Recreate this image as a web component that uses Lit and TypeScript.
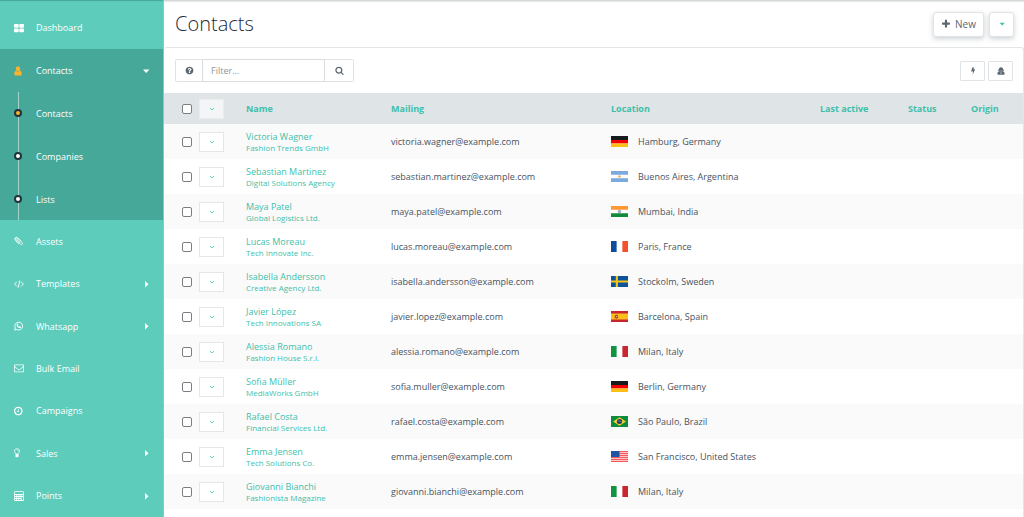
import { LitElement, html, svg, css } from "lit";
import { customElement, property, state } from "lit/decorators.js";

const FA = "0 0 1792 1792";

const icons: Record<string, { box: string; body: unknown }> = {
  dashboard: {
    box: "0 0 10 10",
    body: svg`<rect x="0" y="1" width="4.7" height="3.8" rx=".7"/><rect x="5.3" y="1" width="4.7" height="3.8" rx=".7"/><rect x="0" y="5.4" width="4.7" height="3.8" rx=".7"/><rect x="5.3" y="5.4" width="4.7" height="3.8" rx=".7"/>`,
  },
  user: {
    box: "0 0 10 10",
    body: svg`<ellipse cx="4" cy="2.8" rx="2.2" ry="2.5"/><path d="M2 4.6C.8 5 .3 6.300 .3 7.700 .3 8.900 1 9.600 2 9.600h4c1 0 1.700-.7 1.700-1.900C7.700 6.300 7.200 5 6 4.600 5.500 5.300 4.800 5.700 4 5.700S2.500 5.300 2 4.600z"/>`,
  },
  clip: {
    box: "0 0 10 10",
    body: svg`<path d="M6.600 4.600 3.300 2c-1.300-.9-2.500.6-1.400 1.600l4.500 4.600c1.300 1.200 2.900-.3 1.700-1.700L3.900 2.100C2.200.3-.6 2.300 1.200 4.300l3.400 3.400M2.800 3.300l3.400 3.500" fill="none" stroke="currentColor" stroke-width=".8" stroke-linecap="round"/>`,
  },
  code: {
    box: "0 0 10 10",
    body: svg`<path d="M3 2.700.6 5.100 3 7.500M7 2.700l2.400 2.400L7 7.500M5.800 1.500 4.200 8.700" fill="none" stroke="currentColor" stroke-width=".9"/>`,
  },
  whatsapp: {
    box: "0 0 10 10",
    body: svg`<path d="M.7 9.100 1.300 7A3.900 3.900 0 1 1 2.800 8.500z" fill="none" stroke="currentColor" stroke-width=".9"/><path d="M3.300 2.700c.3-.2.600-.1.700.2l.3.800-.4.700c.3.700.8 1.100 1.500 1.400l.6-.6 1 .5c.2.2.1.700-.2 1-.6.500-1.300.4-2.200 0C3.600 6.200 2.900 5.300 2.700 4.400c-.1-.7.100-1.400.6-1.700z"/>`,
  },
  mail: {
    box: FA,
    body: svg`<path d="M1664 1504v-768q-32 36-69 66-268 206-426 338-51 43-83 67t-86.500 48.500-102.500 24.500h-2q-48 0-102.500-24.500t-86.500-48.500-83-67q-158-132-426-338-37-30-69-66v768q0 13 9.500 22.500t22.500 9.500h1472q13 0 22.500-9.500t9.500-22.500zm0-1051v-24.500l-.5-13-3-12.500-5.500-9-9-7.500-14-2.500h-1472q-13 0-22.500 9.500t-9.500 22.500q0 168 147 284 193 152 401 317 6 5 35 29.500t46 37.500 44.500 31.500 50.500 27.500 43 9h2q20 0 43-9t50.500-27.500 44.500-31.500 46-37.500 35-29.500q208-165 401-317 54-43 100.500-115.500t46.500-131.500zm128-37v1088q0 66-47 113t-113 47h-1472q-66 0-113-47t-47-113v-1088q0-66 47-113t113-47h1472q66 0 113 47t47 113z"/>`,
  },
  clock: {
    box: "128 0 1792 1792",
    body: svg`<path d="M1024 544v448q0 14-9 23t-23 9h-320q-14 0-23-9t-9-23v-64q0-14 9-23t23-9h224v-352q0-14 9-23t23-9h64q14 0 23 9t9 23zm416 352q0-148-73-273t-198-198-273-73-273 73-198 198-73 273 73 273 198 198 273 73 273-73 198-198 73-273zm224 0q0 209-103 385.500t-279.500 279.500-385.500 103-385.500-103-279.500-279.500-103-385.500 103-385.500 279.500-279.500 385.500-103 385.500 103 279.500 279.500 103 385.500z"/>`,
  },
  bulb: {
    box: "0 0 10 10",
    body: svg`<path d="M2 6.200C1.800 5 .5 4.500.5 2.900.5 1.600 1.600.8 3 .8s2.500.8 2.500 2.100C5.500 4.500 4.200 5 4 6.200z" fill="none" stroke="currentColor" stroke-width=".8"/><path d="M3 2c.8 0 1.200.4 1.200 1" fill="none" stroke="currentColor" stroke-width=".5"/><path d="M1.500 6h3v2.200L3.700 9.300H2.300L1.500 8.200z"/>`,
  },
  calculator: {
    box: "0 0 10 10",
    body: svg`<path fill-rule="evenodd" d="M.8.3h8.400q.6 0 .6.6v8.400q0 .6-.6.600H.8q-.6 0-.6-.6V.9Q.2.300.8.300zM1 1.100v1.900h8V1.100zM1 4v1h1.300V4zM3.200 4v1h1.300V4zM5.400 4v1h1.300V4zM7.600 4v1H9V4zM1 6v1h1.300V6zM3.200 6v1h1.300V6zM5.400 6v1h1.300V6zM1 8v1h1.300V8zM3.200 8v1h1.300V8zM5.400 8v1h1.300V8zM7.600 6v3H9V6z"/>`,
  },
  down: { box: "0 0 10 10", body: svg`<path d="M2 3.500h6.400L5.200 7z"/>` },
  right: { box: "0 0 10 10", body: svg`<path d="M4 2v6.400L7.500 5.200z"/>` },
  chevron: {
    box: "0 0 10 10",
    body: svg`<path d="m1.500 3.500 3.500 3 3.500-3" fill="none" stroke="currentColor" stroke-width="1.600"/>`,
  },
  help: {
    box: FA,
    body: svg`<path d="M1024 1376v-192q0-14-9-23t-23-9h-192q-14 0-23 9t-9 23v192q0 14 9 23t23 9h192q14 0 23-9t9-23zm256-672q0-88-55.500-163t-138.500-116-170-41q-243 0-371 213-15 24 8 42l132 100q7 6 19 6 16 0 25-12 53-68 86-92 34-24 86-24 48 0 85.500 26t37.500 59q0 38-20 61t-68 45q-63 28-115.500 86.500t-52.500 125.500v36q0 14 9 23t23 9h192q14 0 23-9t9-23q0-19 21.500-49.500t54.500-49.500q32-18 49-28.500t46-35 44.500-48 28-60.500 12.500-81zm384 192q0 209-103 385.500t-279.500 279.500-385.500 103-385.500-103-279.500-279.500-103-385.500 103-385.500 279.500-279.500 385.500-103 385.500 103 279.500 279.500 103 385.500z"/>`,
  },
  search: {
    box: FA,
    body: svg`<path d="M1216 832q0-185-131.500-316.500t-316.500-131.500-316.500 131.500-131.500 316.500 131.500 316.500 316.500 131.500 316.500-131.500 131.500-316.500zm512 832q0 52-38 90t-90 38q-54 0-90-38l-343-342q-179 124-399 124-143 0-273.500-55.500t-225-150-150-225-55.500-273.500 55.500-273.500 150-225 225-150 273.500-55.500 273.500 55.500 225 150 150 225 55.500 273.500q0 220-124 399l343 343q37 37 37 90z"/>`,
  },
  plus: {
    box: FA,
    body: svg`<path d="M1600 736v192q0 40-28 68t-68 28h-416v416q0 40-28 68t-68 28h-192q-40 0-68-28t-28-68v-416h-416q-40 0-68-28t-28-68v-192q0-40 28-68t68-28h416v-416q0-40 28-68t68-28h192q40 0 68 28t28 68v416h416q40 0 68 28t28 68z"/>`,
  },
  bolt: { box: "0 0 10 10", body: svg`<path d="M4 .7h2.400L5.600 3.200 7.700 2.800 4.500 9.600 5 5.300 2.700 5.800z"/>` },
  anonymous: {
    box: "0 0 10 10",
    body: svg`<path fill-rule="evenodd" d="M3 .8Q5-.1 7 .8L7.700 3.100Q9 3.500 9 4 8.800 4.400 8.100 4.500q.1.900-.3 1.500Q9.600 6.600 9.600 8.300 9.600 9.700 8.200 9.700H1.800Q.4 9.700.4 8.300.4 6.600 2.200 6 1.800 5.400 1.900 4.500 1.200 4.400 1 4 1 3.500 2.300 3.100zM3 4.600v.8h1.700v-.8zM5.300 4.600v.8H7v-.8zM4.400 6.900 4.700 9 5 7.800 5.300 9 5.600 6.900z"/>`,
  },
};

const flags: Record<string, unknown> = {
  de: svg`<path fill="#141a1e" d="M0 0h16v4H0z"/><path fill="#f00000" d="M0 4h16v3.500H0z"/><path fill="#fdbf16" d="M0 7.500h16V11H0z"/>`,
  ar: svg`<path fill="#7caadf" d="M0 0h16v11H0z"/><path fill="#fff" d="M0 3.700h16v3.600H0z"/><circle cx="8" cy="5.500" r="1.300" fill="#f5b25c"/>`,
  in: svg`<path fill="#fff" d="M0 0h16v11H0z"/><path fill="#fb9933" d="M0 0h16v3.700H0z"/><path fill="#118a3c" d="M0 7.300h16V11H0z"/><circle cx="8" cy="5.500" r="1.200" fill="#a9b1cf" stroke="#6a76a8" stroke-width=".5"/>`,
  fr: svg`<path fill="#fff" d="M0 0h16v11H0z"/><path fill="#0c4da2" d="M0 0h5.300v11H0z"/><path fill="#f2502f" d="M10.700 0H16v11h-5.300z"/>`,
  se: svg`<path fill="#0d539b" d="M0 0h16v11H0z"/><path fill="#f8c517" d="M4.500 0h2v11h-2zM0 4.500h16v2H0z"/>`,
  es: svg`<path fill="#c9252f" d="M0 0h16v11H0z"/><path fill="#fbbe1a" d="M0 2.500h16v6H0z"/><path fill="#b34b35" d="M3.500 4.500 5 3.500l1.600 1V7L5 7.800 3.500 7z"/><path fill="#e7a77a" d="M4.700 5h1v1h-1z"/>`,
  it: svg`<path fill="#fff" d="M0 0h16v11H0z"/><path fill="#0f943f" d="M0 0h5.300v11H0z"/><path fill="#ca2630" d="M10.700 0H16v11h-5.300z"/>`,
  br: svg`<path fill="#0f8b3e" d="M0 0h16v11H0z"/><path fill="#f8ce28" d="m8 1.200 6 4.300-6 4.300-6-4.300z"/><circle cx="8" cy="5.500" r="2.500" fill="#193b72"/><path d="M6 4.900q2-.3 4 1.200" stroke="#a9bccb" stroke-width=".5" fill="none"/>`,
  us: svg`<rect width="16" height="11" fill="#ffc9c9"/>${[0, 2, 4, 6, 8, 10].map((y) => svg`<rect y=${y} width="16" height="1" fill="#f7575b"/>`)}<rect width="8" height="6" fill="#1f55a5"/>`,
};

@customElement("ui-icon")
class UiIcon extends LitElement {
  @property() name = "";
  static styles = css`
    :host { display: inline-flex; width: 10px; height: 10px; flex: none; }
    svg { width: 100%; height: 100%; fill: currentColor; overflow: visible; }
  `;
  render() {
    const icon = icons[this.name];
    return html`<svg viewBox=${icon.box} aria-hidden="true">${icon.body}</svg>`;
  }
}

interface MenuItem { label: string; icon: string; more?: boolean }

const menu: MenuItem[] = [
  { label: "Assets", icon: "clip" },
  { label: "Templates", icon: "code", more: true },
  { label: "Whatsapp", icon: "whatsapp", more: true },
  { label: "Bulk Email", icon: "mail" },
  { label: "Campaigns", icon: "clock" },
  { label: "Sales", icon: "bulb", more: true },
  { label: "Points", icon: "calculator", more: true },
];

@customElement("side-nav")
class SideNav extends LitElement {
  static styles = css`
    :host { display: flex; width: 164px; flex: none; background: #5dccbb; }
    nav { flex: 1; display: flex; flex-direction: column; padding-top: 6px; border-right: 1px solid #73d3c4; box-shadow: inset 0 2px 1px -1px #48a596; }
    a { display: flex; align-items: center; color: #fff; text-decoration: none; font-size: 9px; height: 43px; box-sizing: border-box; padding: 0 12px 0 14px; }
    .label { flex: 1; padding-left: 12px; }
    .lead { color: #fff; }
    .rest { flex: 1; display: flex; flex-direction: column; }
    .rest a { flex: 1 0 auto; height: auto; min-height: 42px; max-height: 43px; }
    .open { background: #46a899; }
    .open .lead { color: #fbb32b; }
    .sub { display: flex; flex-direction: column; gap: 1px; margin-left: 18px; border-left: 1px solid #a3d4cc; }
    .sub a { height: 42px; padding: 0 12px 0 0; }
    .sub .label { padding-left: 14px; }
    .dot { width: 8px; height: 8px; box-sizing: border-box; border: 2px solid #20343a; border-radius: 50%; background: #fff; margin-left: -5px; flex: none; }
    .current .dot { background: #fbb32b; }
  `;
  item(m: MenuItem, arrow = "right") {
    return html`<a href="#"><ui-icon class="lead" name=${m.icon}></ui-icon><span class="label">${m.label}</span>${m.more ? html`<ui-icon name=${arrow}></ui-icon>` : ""}</a>`;
  }
  render() {
    return html`<nav>
      ${this.item({ label: "Dashboard", icon: "dashboard" })}
      <div class="open">
        ${this.item({ label: "Contacts", icon: "user", more: true }, "down")}
        <div class="sub">
          ${["Contacts", "Companies", "Lists"].map((l, i) => html`<a href="#" class=${i ? "" : "current"}><span class="dot"></span><span class="label">${l}</span></a>`)}
        </div>
      </div>
      <div class="rest">${menu.map((m) => this.item(m))}</div>
    </nav>`;
  }
}

const contacts = [
  ["Victoria Wagner", "Fashion Trends GmbH", "victoria.wagner@example.com", "de", "Hamburg, Germany"],
  ["Sebastian Martinez", "Digital Solutions Agency", "sebastian.martinez@example.com", "ar", "Buenos Aires, Argentina"],
  ["Maya Patel", "Global Logistics Ltd.", "maya.patel@example.com", "in", "Mumbai, India"],
  ["Lucas Moreau", "Tech Innovate Inc.", "lucas.moreau@example.com", "fr", "Paris, France"],
  ["Isabella Andersson", "Creative Agency Ltd.", "isabella.andersson@example.com", "se", "Stockolm, Sweden"],
  ["Javier López", "Tech Innovations SA", "javier.lopez@example.com", "es", "Barcelona, Spain"],
  ["Alessia Romano", "Fashion House S.r.l.", "alessia.romano@example.com", "it", "Milan, Italy"],
  ["Sofia Müller", "MediaWorks GmbH", "sofia.muller@example.com", "de", "Berlin, Germany"],
  ["Rafael Costa", "Financial Services Ltd.", "rafael.costa@example.com", "br", "São Paulo, Brazil"],
  ["Emma Jensen", "Tech Solutions Co.", "emma.jensen@example.com", "us", "San Francisco, United States"],
  ["Giovanni Bianchi", "Fashionista Magazine", "giovanni.bianchi@example.com", "it", "Milan, Italy"],
  ["", "", "", "", ""],
];

@customElement("contact-table")
class ContactTable extends LitElement {
  @state() private all = false;
  static styles = css`
    :host { display: block; }
    table { width: 100%; table-layout: fixed; border-collapse: collapse; font-size: 9px; color: #47535f; }
    .c-pick { width: 74px; } .c-name { width: 145px; } .c-mail { width: 220px; }
    .c-active { width: 88px; } .c-status { width: 63px; } .c-origin { width: 60px; }
    th, td { text-align: left; padding: 0 8px; height: 35px; box-sizing: border-box; white-space: nowrap; vertical-align: middle; }
    th { height: 31px; background: #dfe5e7; font-weight: 700; }
    th a { color: #3ebfab; }
    tbody tr:nth-child(odd) { background: #fafafa; }
    a { color: #3ebfab; text-decoration: none; }
    td a { display: block; padding-bottom: 1px; }
    .pick { display: flex; align-items: center; gap: 7px; padding-left: 10px; }
    input { appearance: none; width: 10px; height: 10px; margin: 0; border: 1px solid #7b7f83; border-radius: 2px; background: #fff; }
    input:checked { background: #3ebfab; }
    button { width: 25px; height: 20px; padding: 0; border: 1px solid #e4e7e9; background: #fff; color: #5dccbb; display: flex; align-items: center; justify-content: center; }
    th button { background: #f3f5f6; border-color: #e9edee; }
    button ui-icon { width: 6px; height: 6px; }
    .name, .company { display: block; }
    .name { line-height: 13px; }
    .company { font-size: 8px; line-height: 10px; }
    .place { display: flex; align-items: center; gap: 10px; }
    .flag { width: 17px; height: 11px; flex: none; }
  `;
  pick(label: string, checked: boolean, toggle?: () => void) {
    return html`<div class="pick"><input type="checkbox" aria-label=${label} .checked=${checked} @change=${toggle} /><button aria-label="Options"><ui-icon name="chevron"></ui-icon></button></div>`;
  }
  render() {
    return html`<table>
      <colgroup><col class="c-pick" /><col class="c-name" /><col class="c-mail" /><col /><col class="c-active" /><col class="c-status" /><col class="c-origin" /></colgroup>
      <thead><tr>
        <th>${this.pick("Select all", this.all, () => (this.all = !this.all))}</th>
        ${["Name", "Mailing", "Location", "Last active", "Status", "Origin"].map((h) => html`<th scope="col"><a href="#">${h}</a></th>`)}
      </tr></thead>
      <tbody>${contacts.map(([name, company, mail, flag, place]) => html`<tr>
        <td>${this.pick("Select contact", this.all)}</td>
        <td>${name ? html`<a href="#"><span class="name">${name}</span><span class="company">${company}</span></a>` : ""}</td>
        <td>${mail}</td>
        <td>${flag ? html`<div class="place"><svg class="flag" viewBox="0 0 16 11" preserveAspectRatio="none" aria-hidden="true">${flags[flag]}</svg><span>${place}</span></div>` : ""}</td>
        <td></td><td></td><td></td>
      </tr>`)}</tbody>
    </table>`;
  }
}

@customElement("app-root")
class AppRoot extends LitElement {
  static styles = css`
    :host { display: flex; height: 100vh; overflow: hidden; background: #fff; font-family: "Open Sans", sans-serif; color: #5b6670; }
    main { flex: 1; min-width: 0; display: flex; flex-direction: column; border-top: 1px solid #d5d8d9; }
    header { display: flex; align-items: center; height: 46px; box-sizing: border-box; padding: 0 10px 0 11px; box-shadow: inset 0 1px 1px #e6e8e9; }
    h1 { flex: 1; margin: 0; font-size: 20px; line-height: 28px; font-weight: 300; color: #1f2b37; }
    button { font-family: inherit; padding: 0; margin: 0; color: #5b6670; background: #fff; border: 1px solid #e0e4e6; display: flex; align-items: center; justify-content: center; }
    .actions { display: flex; gap: 5px; }
    .actions button { height: 25px; border-radius: 3px; box-shadow: 0 2px 5px rgba(60, 80, 90, 0.25); font-size: 10px; gap: 4px; }
    .new { width: 51px; }
    .more { width: 25px; }
    .more ui-icon { width: 8px; height: 8px; color: #3ebfab; }
    .panel { flex: 1; min-height: 0; overflow: auto; scrollbar-width: none; border: 1px solid #e3e6e8; border-width: 1px 1px 0 0; border-radius: 3px 3px 0 0; }
    .tools { display: flex; align-items: center; justify-content: space-between; height: 45px; padding: 0 10px 0 11px; }
    .filter, .views { display: flex; }
    .views { gap: 3px; }
    .views button { width: 25px; height: 20px; border-radius: 1px; }
    .filter button { width: 29px; height: 23px; }
    .filter .help { width: 27px; border-right: 0; border-radius: 2px 0 0 2px; }
    .filter .find { border-left: 0; border-radius: 0 2px 2px 0; }
    .filter input { width: 123px; height: 23px; box-sizing: border-box; margin: 0; padding: 0 8px; border: 1px solid #d9dde0; border-radius: 0; font: 9px "Open Sans", sans-serif; color: #47535f; outline: none; }
    .filter input::placeholder { color: #8f969b; opacity: 1; }
    .help ui-icon, .find ui-icon { width: 9px; height: 9px; }
    .views ui-icon { width: 8px; height: 8px; }
  `;
  render() {
    return html`
      <side-nav></side-nav>
      <main>
        <header>
          <h1>Contacts</h1>
          <div class="actions">
            <button class="new"><ui-icon name="plus"></ui-icon>New</button>
            <button class="more" aria-label="More actions"><ui-icon name="down"></ui-icon></button>
          </div>
        </header>
        <section class="panel">
          <div class="tools">
            <div class="filter">
              <button class="help" aria-label="Help"><ui-icon name="help"></ui-icon></button>
              <input type="text" placeholder="Filter..." aria-label="Filter" />
              <button class="find" aria-label="Search"><ui-icon name="search"></ui-icon></button>
            </div>
            <div class="views">
              <button aria-label="Quick add"><ui-icon name="bolt"></ui-icon></button>
              <button aria-label="Anonymous visitors"><ui-icon name="anonymous"></ui-icon></button>
            </div>
          </div>
          <contact-table></contact-table>
        </section>
      </main>`;
  }
}
